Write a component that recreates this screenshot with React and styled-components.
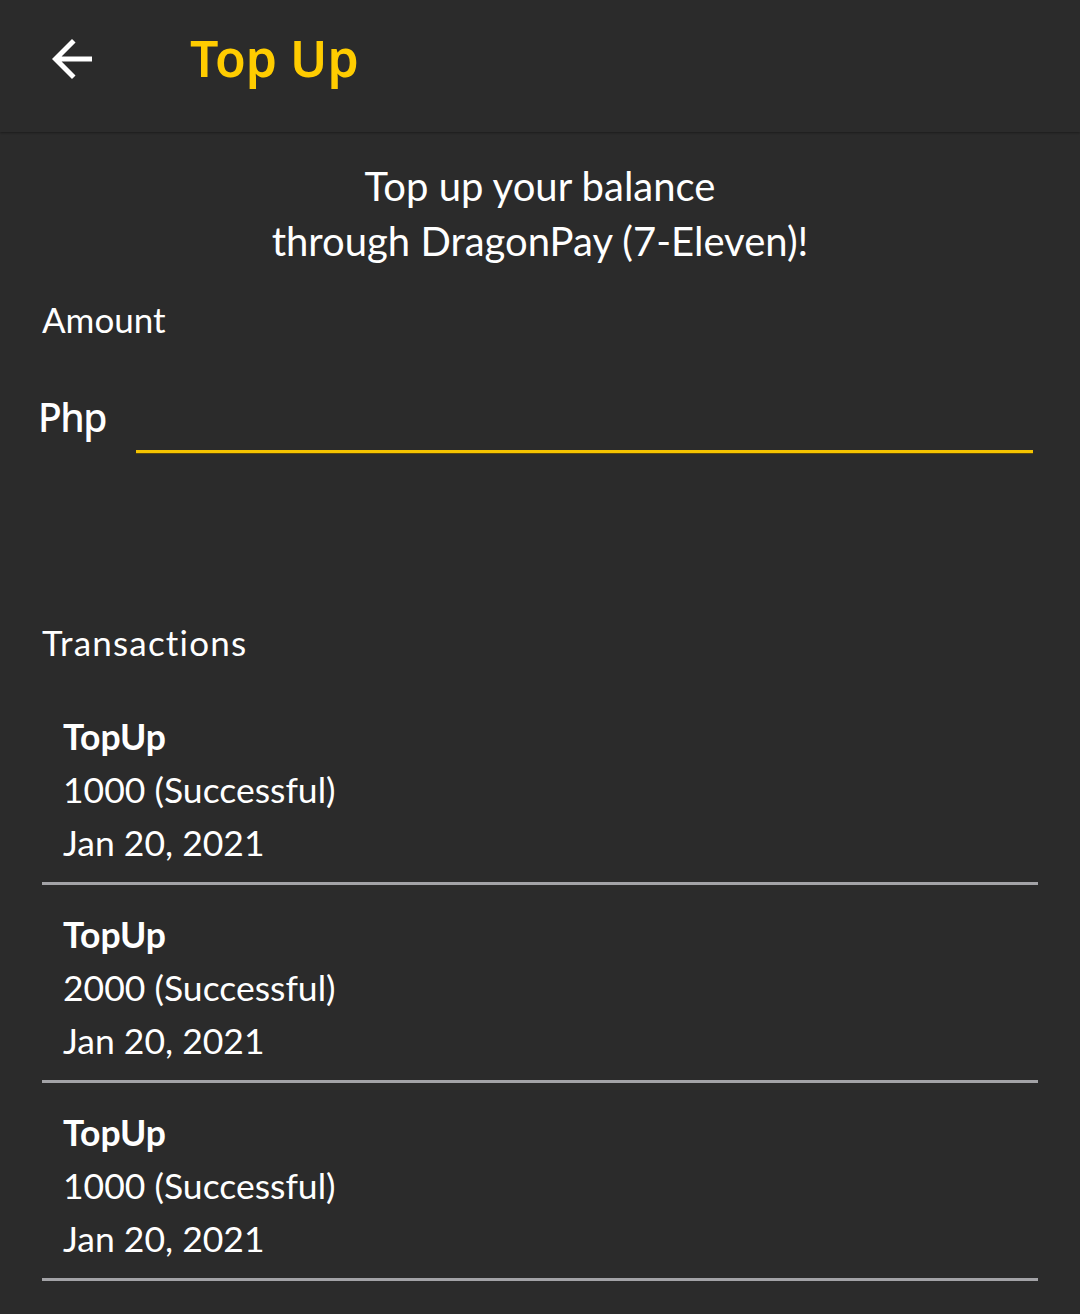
import React from "react";
import styled, { createGlobalStyle } from "styled-components";

const Global = createGlobalStyle`
  html, body { margin: 0; padding: 0; background: #2b2b2b; }
  body { font-family: "Lato", "Open Sans", sans-serif; color: #ffffff; }
  * { box-sizing: border-box; }
`;

const Page = styled.div`
  width: 1080px;
  min-height: 1314px;
  background: #2b2b2b;
  overflow: hidden;
`;

const Header = styled.header`
  height: 132px;
  display: flex;
  align-items: center;
  padding-left: 42px;
  background: #2b2b2b;
  box-shadow: 0 1px 2px rgba(0, 0, 0, 0.35);
  position: relative;
`;

const BackButton = styled.button`
  width: 60px;
  height: 60px;
  padding: 0;
  border: none;
  background: transparent;
  display: flex;
  align-items: center;
  justify-content: center;
  margin-top: -15px;
  svg { width: 60px; height: 60px; fill: #ffffff; }
`;

const Title = styled.h1`
  margin: -16px 0 0 88px;
  font-family: "Noto Sans", "Open Sans", sans-serif;
  font-weight: 600;
  font-size: 50px;
  color: #ffcc00;
  letter-spacing: 0;
`;

const Content = styled.main`
  padding: 0 42px;
  display: flex;
  flex-direction: column;
`;

const Intro = styled.p`
  margin: 27px 0 0;
  text-align: center;
  font-size: 40px;
  line-height: 55px;
  font-weight: 400;
`;

const Label = styled.div`
  font-size: 35px;
  line-height: 40px;
  margin-top: ${(p) => p.$top}px;
  letter-spacing: ${(p) => p.$spacing || 0}px;
`;

const AmountRow = styled.div`
  display: flex;
  align-items: flex-start;
  margin-top: 54px;
  margin-left: -4px;
`;

const Currency = styled.span`
  font-family: "Noto Sans", "Open Sans", sans-serif;
  font-weight: 500;
  font-size: 39px;
  line-height: 48px;
  width: 98px;
  letter-spacing: -1.5px;
`;

const AmountInput = styled.input`
  flex: 0 0 897px;
  height: 60px;
  background: transparent;
  border: none;
  border-bottom: 3px solid #f5c400;
  box-shadow: 0 1px 0 rgba(120, 90, 0, 0.6);
  color: #fff;
  font-family: "Lato", sans-serif;
  font-size: 36px;
  outline: none;
  padding: 0;
`;

const List = styled.ul`
  list-style: none;
  margin: 25px 0 0;
  padding: 0;
  width: 996px;
`;

const Item = styled.li`
  padding: 23px 0 13px 21px;
  border-bottom: 3px solid #a3a3a7;
  display: flex;
  flex-direction: column;
`;

const ItemLine = styled.span`
  font-size: 35.5px;
  line-height: 53px;
  font-weight: ${(p) => (p.$bold ? 700 : 400)};
`;

const transactions = [
  { type: "TopUp", amount: "1000", status: "Successful", date: "Jan 20, 2021" },
  { type: "TopUp", amount: "2000", status: "Successful", date: "Jan 20, 2021" },
  { type: "TopUp", amount: "1000", status: "Successful", date: "Jan 20, 2021" },
];

export default function App() {
  return (
    <Page>
      <Global />
      <Header>
        <BackButton aria-label="Back">
          <svg viewBox="0 0 24 24">
            <path d="M20 11H7.83l5.59-5.59L12 4l-8 8 8 8 1.41-1.41L7.83 13H20v-2z" />
          </svg>
        </BackButton>
        <Title>Top Up</Title>
      </Header>
      <Content>
        <Intro>
          Top up your balance
          <br />
          through DragonPay (7-Eleven)!
        </Intro>
        <Label $top={30}>Amount</Label>
        <AmountRow>
          <Currency>Php</Currency>
          <AmountInput type="text" />
        </AmountRow>
        <Label $top={169} $spacing={1.2}>Transactions</Label>
        <List>
          {transactions.map((t, i) => (
            <Item key={i}>
              <ItemLine $bold>{t.type}</ItemLine>
              <ItemLine>
                {t.amount} ({t.status})
              </ItemLine>
              <ItemLine>{t.date}</ItemLine>
            </Item>
          ))}
        </List>
      </Content>
    </Page>
  );
}
